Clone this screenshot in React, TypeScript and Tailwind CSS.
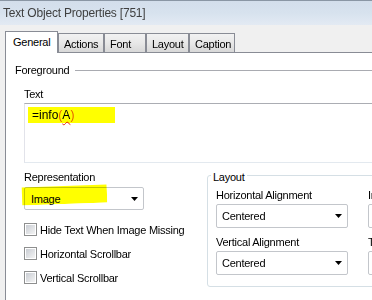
import React from "react";

const ui = "font-['Liberation_Sans',Arial,sans-serif] text-[11px] tracking-[-0.25px] leading-[14px] text-black";

function Arrow() {
  return (
    <svg width="7" height="4" viewBox="0 0 7 4" className="shrink-0">
      <path d="M0 0h7L3.5 4z" fill="#000" />
    </svg>
  );
}

function Combo({ value, className = "" }: { value: string; className?: string }) {
  return (
    <div
      className={`flex items-center justify-between rounded-[2px] border border-[#c3c6cb] bg-white pr-[5px] ${className}`}
    >
      <span>{value}</span>
      <Arrow />
    </div>
  );
}

function Check({ label }: { label: string }) {
  return (
    <div className="flex items-center h-[13px] gap-[3px]">
      <div className="w-[13px] h-[13px] shrink-0 border border-[#8e8f8f] bg-white p-[1px]">
        <div className="w-full h-full bg-linear-to-br from-[#c9cdd3] to-[#f4f4f4]" />
      </div>
      <span>{label}</span>
    </div>
  );
}

const tabs = [
  { name: "Actions", w: "w-[46px]" },
  { name: "Font", w: "w-[42px]" },
  { name: "Layout", w: "w-[43px]" },
  { name: "Caption", w: "w-[46px]" },
];

export default function App() {
  return (
    <div className={`w-[372px] h-[300px] overflow-hidden bg-[#f0f0f0] flex flex-col ${ui}`}>
      {/* Title bar */}
      <div className="h-[25px] shrink-0 border-t border-[#8a96a4] bg-linear-to-b from-[#d3deeb] via-[#d7e2ee] to-[#e3eaf3] flex items-center pl-[3px]">
        <span className="text-[12px] tracking-[-0.2px] text-[#3f3f3f]">Text Object Properties [751]</span>
      </div>

      {/* Tabs */}
      <div className="mt-[6px] h-[21px] shrink-0 flex items-end pl-[5px]">
        <div className="relative z-10 w-[53px] h-[22px] mb-[-1px] border border-b-0 border-[#898c95] bg-white pl-[7px] pt-[3px]">
          General
        </div>
        {tabs.map((t) => (
          <div
            key={t.name}
            className={`${t.w} h-[19px] border border-b-0 border-[#898c95] bg-linear-to-b from-[#f2f2f2] via-[#e8e8e8] to-[#d8d8d8] pl-[5px] pt-[3px]`}
          >
            {t.name}
          </div>
        ))}
      </div>

      {/* Tab page */}
      <div className="ml-[5px] flex-1 border-t border-l border-[#898c95] bg-white flex flex-col">
        <div className="mt-[10px] h-[14px] flex items-center pl-[9px]">
          <span>Foreground</span>
          <div className="ml-[6px] flex-1 h-px bg-[#a9abb1]" />
        </div>

        <div className="pl-[18px]">
          <div className="mt-[10px]">Text</div>
          <div className="relative mt-[2px] w-[400px] h-[60px] border border-t-[#abadb3] border-l-[#e2e3ea] border-b-[#e3e9ef] border-r-[#dbdfe6]">
            <div className="relative pl-[7px] pt-[4px] text-[12px] tracking-normal">
              =info<span className="text-[#e5600a]">(</span>
              <span className="underline decoration-wavy decoration-[#e02020] decoration-1 underline-offset-2">A</span>
              <span className="text-[#e5600a]">)</span>
            </div>
            <div className="absolute left-[3px] top-[3px] w-[87px] h-[16px] bg-[#ffff00] mix-blend-multiply" />
          </div>

          <div className="flex">
            {/* Left column */}
            <div className="w-[183px] shrink-0 flex flex-col">
              <div className="mt-[7px]">Representation</div>
              <div className="relative mt-[3px] w-[120px] h-[23px]">
                <Combo value="Image" className="h-[23px] w-[120px] pl-[6px]" />
                <div className="absolute left-[-2px] top-[-1px] w-[85px] h-[18px] -rotate-2 bg-[#ffff00] mix-blend-multiply" />
              </div>
              <div className="mt-[13px] flex flex-col gap-[11px]">
                <Check label="Hide Text When Image Missing" />
                <Check label="Horizontal Scrollbar" />
                <Check label="Vertical Scrollbar" />
              </div>
            </div>

            {/* Layout group */}
            <div className="relative mt-[12px] h-[112px] w-[300px] rounded-[3px] border border-[#d5dfe5] pl-[8px]">
              <span className="absolute left-[3px] top-[-6px] bg-white px-[2px]">Layout</span>
              <div className="mt-[12px] grid grid-cols-[132px_150px] gap-x-[20px]">
                <div>Horizontal Alignment</div>
                <div>Image Stretch</div>
                <Combo value="Centered" className="mt-[2px] h-[24px] pl-[5px]" />
                <div className="mt-[2px] h-[24px] rounded-[2px] border border-[#c3c6cb]" />
                <div className="mt-[7px]">Vertical Alignment</div>
                <div className="mt-[7px]">Text Margin</div>
                <Combo value="Centered" className="mt-[2px] h-[24px] pl-[5px]" />
                <div className="mt-[2px] h-[24px] rounded-[2px] border border-[#c3c6cb] flex items-center pl-[4px]">2 pt</div>
              </div>
            </div>
          </div>
        </div>
      </div>
    </div>
  );
}
